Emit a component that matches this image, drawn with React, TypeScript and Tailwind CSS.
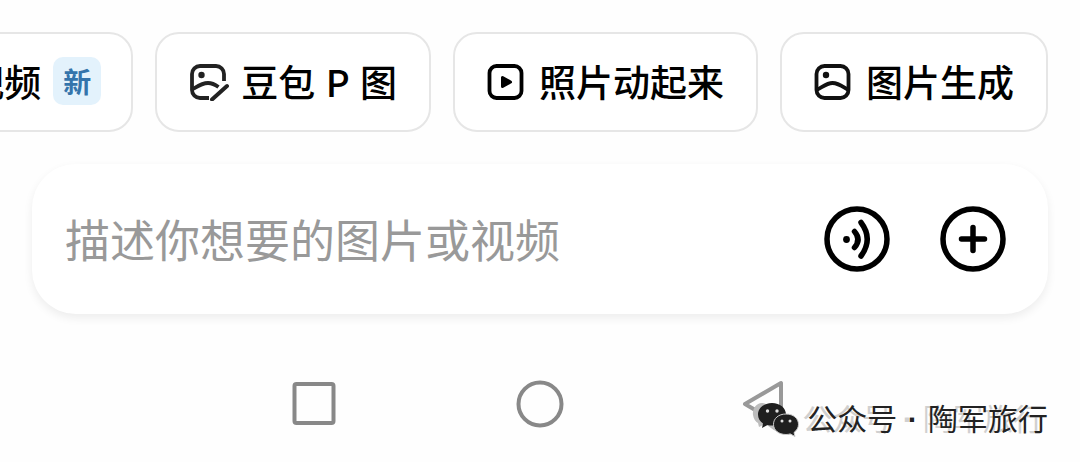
import type { ReactNode } from "react";

function PictureIcon() {
  return (
    <svg className="size-10 shrink-0" viewBox="2 -2 40 40" fill="none" stroke="#111" strokeWidth="3.8" aria-hidden="true">
      <rect x="4.500" y="3" width="32" height="32" rx="8" />
      <circle cx="14" cy="12" r="3.2" fill="#111" stroke="none" />
      <path d="M4.500 27C10 24.500 14.500 20 20.500 20S30.500 23.500 36.500 27" />
    </svg>
  );
}

function PictureEditIcon() {
  return (
    <svg className="size-10 shrink-0" viewBox="2 -2 40 40" fill="none" stroke="#222" strokeWidth="3.8" aria-hidden="true">
      <path d="M37 18V11a8 8 0 0 0-8-8H13a8 8 0 0 0-8 8v16a8 8 0 0 0 8 8h9" />
      <circle cx="14.500" cy="12" r="3.200" fill="#222" stroke="none" />
      <path d="M5 26.500C11 23 15 20 21 20c4 0 7 1.500 10.500 4" />
      <path d="M25 36.500L40 23" strokeWidth="4" strokeLinecap="round" />
    </svg>
  );
}

function PlayIcon() {
  return (
    <svg className="size-10 shrink-0" viewBox="2 -2 40 40" fill="none" stroke="#000" strokeWidth="3.8" aria-hidden="true">
      <rect x="4.500" y="3" width="32" height="32" rx="7" />
      <path d="M17.500 14.500v9l8-4.500z" fill="#000" strokeWidth="3" strokeLinejoin="round" />
    </svg>
  );
}

function VoiceIcon() {
  return (
    <svg className="size-[66px]" viewBox="0 0 66 66" fill="none" stroke="#000" strokeWidth="5.500" strokeLinecap="round" aria-hidden="true">
      <circle cx="33" cy="33" r="30" />
      <circle cx="22.500" cy="33.500" r="3.400" fill="#000" stroke="none" />
      <path d="M30.500 25.500Q37.500 33.500 30.500 41.500" />
      <path d="M37 16.500Q49.500 33 37 50" />
    </svg>
  );
}

function PlusIcon() {
  return (
    <svg className="size-[66px]" viewBox="0 0 66 66" fill="none" stroke="#000" strokeWidth="5.500" strokeLinecap="round" aria-hidden="true">
      <circle cx="33" cy="33" r="30" />
      <path d="M33 21.500v23M21.500 33h23" />
    </svg>
  );
}

function WeChatIcon() {
  return (
    <svg className="h-9 w-[42px] shrink-0 overflow-visible" viewBox="0 0 42 36" aria-hidden="true">
      <path d="M9 3C1-1-5 7-4 14c.5 4 3 7 5 8l1 4 6-3c6 3 10 9 20 9z" fill="#bdbdbd" />
      <path d="M15 2C7 2 1 7 1 13.500c0 4 2 7 5 9L5 27l5.500-3c1.500.5 3 .6 4.500.6 8 0 14-4.600 14-11.100S23 2 15 2z" fill="#1f1f1f" />
      <path d="M29 13c-7.500 0-12.500 4.500-12.500 10.300S21.500 33.500 29 33.500c1.500 0 3-.2 4.200-.6L38 35.500l-1-4c2.700-2 4.500-4.700 4.500-8.200C41.500 17.500 36.500 13 29 13z" fill="#1f1f1f" stroke="#ccc" strokeWidth="1" />
      <g fill="#ddd">
        <circle cx="10.500" cy="10" r="1.700" />
        <circle cx="20" cy="10" r="1.700" />
        <circle cx="25" cy="20" r="1.500" />
        <circle cx="33" cy="20" r="1.500" />
      </g>
    </svg>
  );
}

function Chip({ children }: { children: ReactNode }) {
  return (
    <button
      type="button"
      className="flex h-[100px] shrink-0 items-center gap-3 rounded-3xl border-2 border-[#e6e6e6] bg-white px-8 pb-0.5 text-[37px] leading-none font-medium whitespace-nowrap text-black"
    >
      {children}
    </button>
  );
}

export default function App() {
  return (
    <main className="relative overflow-hidden bg-[#fefefe] pt-8 font-['Noto_Sans_CJK_SC',sans-serif]">
      <div className="flex justify-end gap-[22px] overflow-hidden px-8">
        <Chip>
          <span>视频</span>
          <span className="-mr-0.5 flex size-12 items-center justify-center rounded-[10px] bg-[#e3f2fc] text-[28px] font-bold text-[#3474ab]">新</span>
        </Chip>
        <Chip>
          <PictureEditIcon />
          <span>豆包<span className="px-0.5"> P </span>图</span>
        </Chip>
        <Chip>
          <PlayIcon />
          <span>照片动起来</span>
        </Chip>
        <Chip>
          <PictureIcon />
          <span>图片生成</span>
        </Chip>
      </div>

      <form
        className="mx-8 mt-8 flex h-[150px] items-center gap-[50px] rounded-[44px] bg-white pr-[42px] pl-[33px] shadow-[0_4px_10px_rgba(0,0,0,0.07)]"
        onSubmit={(event) => event.preventDefault()}
      >
        <input
          type="text"
          aria-label="描述你想要的图片或视频"
          placeholder="描述你想要的图片或视频"
          className="min-w-0 flex-1 bg-transparent text-[45px] leading-[60px] text-black outline-none placeholder:text-[#999]"
        />
        <button type="button" aria-label="语音">
          <VoiceIcon />
        </button>
        <button type="button" aria-label="添加">
          <PlusIcon />
        </button>
      </form>

      <nav className="flex h-[148px] items-center justify-center gap-[178px] pt-8">
        <button type="button" aria-label="最近任务">
          <svg className="size-12" viewBox="0 0 48 48" fill="none" stroke="#888" strokeWidth="4" aria-hidden="true">
            <rect x="4.500" y="4" width="39" height="39" rx="2" />
          </svg>
        </button>
        <button type="button" aria-label="主屏幕">
          <svg className="size-12" viewBox="0 0 48 48" fill="none" stroke="#888" strokeWidth="4" aria-hidden="true">
            <circle cx="24" cy="24" r="21.500" />
          </svg>
        </button>
        <button type="button" aria-label="返回">
          <svg className="size-12" viewBox="0 0 48 48" fill="none" stroke="#999" strokeWidth="4" strokeLinejoin="round" aria-hidden="true">
            <path d="M39 3v42L3 24z" />
          </svg>
        </button>
      </nav>

      <div className="absolute right-8 bottom-6 flex items-center gap-2 text-[30px] leading-9 whitespace-nowrap text-[#222] [text-shadow:-5px_0_0_#d0d0d0]">
        <WeChatIcon />
        <span>公众号<span className="px-0.5 font-['Liberation_Sans',sans-serif] font-bold"> · </span>陶军旅行</span>
      </div>
    </main>
  );
}
